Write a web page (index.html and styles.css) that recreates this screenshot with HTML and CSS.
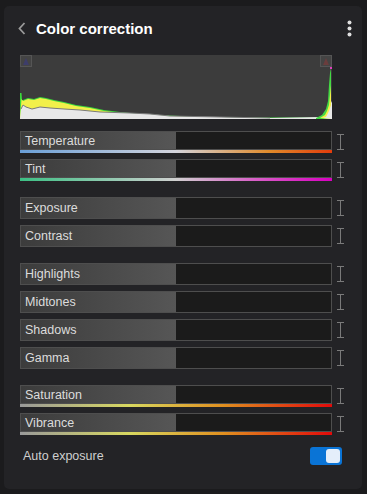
FILE: index.html
```html
<!DOCTYPE html>
<html lang="en">
  <head>
    <meta charset="UTF-8" />
    <title>Color correction</title>
    <link rel="stylesheet" href="styles.css">
  </head>
  <body>
    <div class="panel">
      <div class="panel-header">
        <svg class="back" width="8" height="13" viewBox="0 0 8 13">
          <path d="M6.5 1 L1.5 6.5 L6.5 12" fill="none" stroke="#9a9a9a" stroke-width="1.8" />
        </svg>
        <span class="panel-title">Color correction</span>
        <svg class="kebab" width="5" height="17" viewBox="0 0 5 17">
          <circle cx="2.5" cy="2.5" r="2" fill="#e0e0e0" />
          <circle cx="2.5" cy="8.5" r="2" fill="#e0e0e0" />
          <circle cx="2.5" cy="14.5" r="2" fill="#e0e0e0" />
        </svg>
      </div>

      <div class="panel-body">
        <div class="histogram">
          <svg width="312" height="64" viewBox="0 0 312 64">
            <path d="M0 38 L1.5 38 L2 45 L3 45 L8 43 L14 44 L20 42 L26 43 L34 45 L44 47 L56 50 L70 52 L84 55 L100 57 L120 59 L150 60.5 L190 62.5 L312 62.5 L312 64 L0 64 Z" fill="#3bd93b" />
            <path d="M1.5 44 L3 46 L8 44 L14 45 L20 43 L26 44 L34 46 L44 48 L56 51 L70 53 L84 56 L100 58 L120 60 L150 61 L190 63 L312 63 L312 64 L0 64 Z" fill="#f2f04a" />
            <path d="M1 54 L3 50 L6 52 L12 54 L20 52 L30 53 L44 54 L60 55 L80 57 L110 58 L130 59 L150 61 L200 62 L250 63 L300 62 L306 58 L312 46 L312 64 L0 64 Z" fill="#e8e8e8" />
            <path d="M1 54 L3 50 L6 52 L12 54 L20 52 L30 53 L44 54 L60 55 L80 57 L110 58 L130 59 L150 61 L200 62 L250 63" fill="none" stroke="#7a7a7a" stroke-width="1" />
            <path d="M296 63 L302 60 L306 54 L308 46 L309 30 L310 18 L311 13 L311 64 L296 64 Z" fill="#44d944" />
            <path d="M300 63 L305 60 L307 56 L309 50 L311 30 L311 64 Z" fill="#f2f04a" />
            <path d="M303 63 L306 62 L309 56 L311 50 L311 64 Z" fill="#e8e8e8" />
            <rect x="310" y="9" width="2" height="5" fill="#e040c0" />
            <rect x="0.5" y="0.5" width="11" height="11" class="hist-corner" />
            <path d="M3 10 L6 3 L9 10 Z" fill="#3d3d6a" />
            <rect x="300.5" y="0.5" width="11" height="11" class="hist-corner" />
            <path d="M303 10 L306 3 L309 10 Z" fill="#6a3d3d" />
          </svg>
        </div>

        <div class="group">
          <div class="slider-row">
            <div class="slider">
              <div class="slider-box"><span class="slider-label">Temperature</span><span class="slider-track"></span></div>
              <div class="slider-bar bar-temp"></div>
            </div>
            <span class="beam"></span>
          </div>
          <div class="slider-row">
            <div class="slider">
              <div class="slider-box"><span class="slider-label">Tint</span><span class="slider-track"></span></div>
              <div class="slider-bar bar-tint"></div>
            </div>
            <span class="beam"></span>
          </div>
        </div>

        <div class="group">
          <div class="slider-row">
            <div class="slider">
              <div class="slider-box tall"><span class="slider-label">Exposure</span><span class="slider-track"></span></div>
            </div>
            <span class="beam"></span>
          </div>
          <div class="slider-row">
            <div class="slider">
              <div class="slider-box tall"><span class="slider-label">Contrast</span><span class="slider-track"></span></div>
            </div>
            <span class="beam"></span>
          </div>
        </div>

        <div class="group">
          <div class="slider-row">
            <div class="slider">
              <div class="slider-box tall"><span class="slider-label">Highlights</span><span class="slider-track"></span></div>
            </div>
            <span class="beam"></span>
          </div>
          <div class="slider-row">
            <div class="slider">
              <div class="slider-box tall"><span class="slider-label">Midtones</span><span class="slider-track"></span></div>
            </div>
            <span class="beam"></span>
          </div>
          <div class="slider-row">
            <div class="slider">
              <div class="slider-box tall"><span class="slider-label">Shadows</span><span class="slider-track"></span></div>
            </div>
            <span class="beam"></span>
          </div>
          <div class="slider-row">
            <div class="slider">
              <div class="slider-box tall"><span class="slider-label">Gamma</span><span class="slider-track"></span></div>
            </div>
            <span class="beam"></span>
          </div>
        </div>

        <div class="group">
          <div class="slider-row">
            <div class="slider">
              <div class="slider-box"><span class="slider-label">Saturation</span><span class="slider-track"></span></div>
              <div class="slider-bar bar-sat"></div>
            </div>
            <span class="beam"></span>
          </div>
          <div class="slider-row">
            <div class="slider">
              <div class="slider-box"><span class="slider-label">Vibrance</span><span class="slider-track"></span></div>
              <div class="slider-bar bar-sat"></div>
            </div>
            <span class="beam"></span>
          </div>
        </div>
      </div>

      <div class="auto-row">
        <span class="auto-label">Auto exposure</span>
        <span class="toggle"><span class="toggle-knob"></span></span>
      </div>
    </div>
  </body>
</html>
```

FILE: styles.css
```css
* {
  box-sizing: border-box;
}

body {
  margin: 0;
  background-color: #1b1b1d;
  font-family: "Liberation Sans", Arial, sans-serif;
}

.panel {
  margin: 6px 0 0 4px;
  width: 358px;
  height: 483px;
  border-radius: 5px;
  background-color: #232326;
  display: flex;
  flex-direction: column;
}

.panel-header {
  height: 42px;
  display: flex;
  align-items: center;
  padding: 2px 0 0 14px;
}

.back {
  display: block;
}

.panel-title {
  margin-left: 10px;
  font-size: 15px;
  font-weight: bold;
  color: #ffffff;
  flex: 1;
}

.kebab {
  display: block;
  margin-right: 10px;
}

.panel-body {
  padding: 7px 0 0 16px;
}

.histogram {
  width: 312px;
  height: 64px;
  background-color: #3c3c3c;
}

.histogram svg {
  display: block;
}

.hist-corner {
  fill: #444444;
  stroke: #555555;
  stroke-width: 1;
}

.group {
  margin-top: 16px;
  display: flex;
  flex-direction: column;
  gap: 6px;
}

.histogram + .group {
  margin-top: 12px;
}

.slider-row {
  display: flex;
  align-items: flex-start;
}

.slider {
  width: 312px;
}

.slider-box {
  height: 19px;
  display: flex;
  border: 1px solid #4e4e4e;
}

.slider-box.tall {
  height: 22px;
}

.slider-label {
  width: 155px;
  padding-left: 4px;
  display: flex;
  align-items: center;
  font-size: 12.5px;
  color: #dcdcdc;
  background: linear-gradient(to right, #3c3c3c, #565656);
}

.slider-track {
  flex: 1;
  background-color: #1b1b1b;
}

.slider-bar {
  height: 3px;
}

.bar-temp {
  background: linear-gradient(to right, #6a9fd8, #d4d4dc 50%, #e08a2a 80%, #e43c0c);
}

.bar-tint {
  background: linear-gradient(to right, #3cc084, #d0d0d0 50%, #d860c8 75%, #d800c0);
}

.bar-sat {
  background: linear-gradient(to right, #9a9a9a, #d8d860 35%, #e09020 65%, #e20a0a);
}

.beam {
  position: relative;
  margin: 3px 0 0 5px;
  width: 7px;
  height: 16px;
  border-top: 1px solid #7a7a7a;
  border-bottom: 1px solid #7a7a7a;
}

.beam::before {
  content: "";
  position: absolute;
  left: 3px;
  top: 0;
  bottom: 0;
  width: 1px;
  background-color: #7a7a7a;
}

.auto-row {
  margin-top: 12px;
  display: flex;
  align-items: center;
  justify-content: space-between;
  padding: 0 20px 0 19px;
  height: 18px;
}

.auto-label {
  font-size: 12.5px;
  color: #cfcfcf;
}

.toggle {
  width: 32px;
  height: 18px;
  border-radius: 3px;
  background-color: #0a74d6;
  display: flex;
  justify-content: flex-end;
  align-items: center;
  padding-right: 2px;
}

.toggle-knob {
  width: 14px;
  height: 14px;
  border-radius: 3px;
  background-color: #e4eefa;
}
```
